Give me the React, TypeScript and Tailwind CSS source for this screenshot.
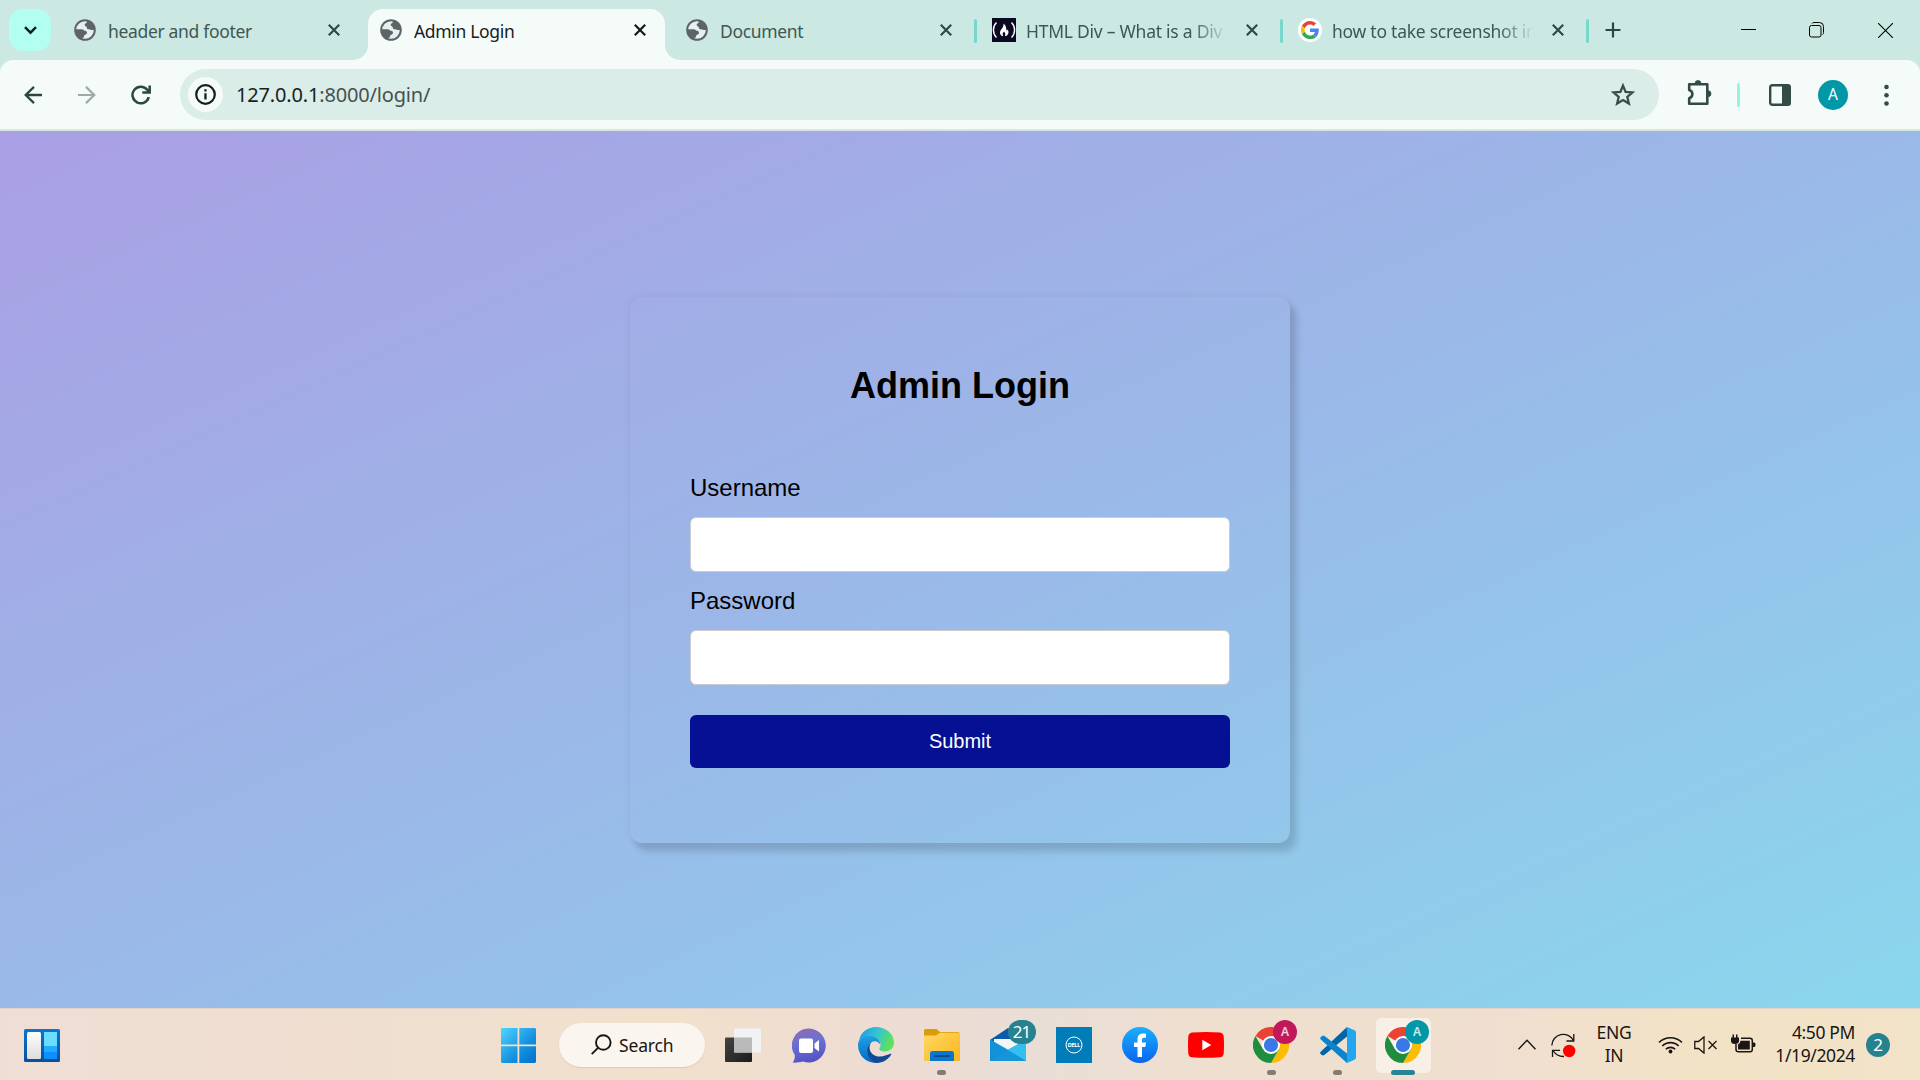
import React from "react";

const UI = "font-['Noto_Sans','Open_Sans',sans-serif]";

function Globe() {
  return (
    <svg width="22" height="22" viewBox="0 0 22 22">
      <circle cx="11" cy="11" r="9.800" fill="#e4f1ee" stroke="#5f6368" strokeWidth="2" />
      <path d="M13 1.500C12.700 2.600 13.200 3.300 12.200 4c-1 .6-1.700 1-1.500 2.200.2 1 1.600.8 1.900 1.700.4 1.400.6 2.300 2.300 2.400 1.600.1 2.600.8 3.600.8h2.400C20.900 6.500 17.500 2.500 13 1.500z" fill="#5f6368" />
      <path d="M1.500 10.200H7.500c2 0 2.500 1.600 4.200 1.900 1.700.3 1.800 2.800.2 3.300-1.500.4-1.800.9-1.900 2.100-.1.900-.7 1.200-1.500 1.500L7.500 20.400C3.600 18.800 1.100 15 1.500 10.200z" fill="#5f6368" />
    </svg>
  );
}

function CloseX({ color }: { color: string }) {
  return (
    <svg width="12" height="12" viewBox="0 0 12 12">
      <path d="M0.800 0.800 11.200 11.200M11.200 0.800 0.800 11.200" stroke={color} strokeWidth="2.200" />
    </svg>
  );
}

function FccIcon() {
  return (
    <svg width="24" height="24" viewBox="0 0 24 24">
      <rect width="24" height="24" fill="#0a0a23" />
      <path d="M4.500 4.500C.4 8.500.4 15.500 4.500 19.500M19.500 4.500c4.100 4 4.100 11 0 15" fill="none" stroke="#fff" strokeWidth="1.400" />
      <path d="M11.500 5.500c.2 2.600-.8 4-2.100 5.800-1.600 2-2.200 4.500.4 6.700h1.400c-1.200-2-.2-3.400 1-4.400 .3 1.300 1.900 2.100 .8 4.400h1.300c2.600-1.800 2.700-4.300 1.400-6.500-.3.700-.6 1-1.200 1C14.300 10 14 7.500 11.500 5.500z" fill="#fff" />
    </svg>
  );
}

function GoogleIcon() {
  return (
    <svg width="24" height="24" viewBox="0 0 24 24">
      <circle cx="12" cy="12" r="12" fill="#fff" />
      <g transform="translate(2.900 2.900) scale(0.380)">
        <path fill="#EA4335" d="M24 9.500c3.540 0 6.710 1.220 9.210 3.600l6.850-6.850C35.900 2.380 30.470 0 24 0 14.620 0 6.510 5.380 2.560 13.220l7.980 6.190C12.430 13.720 17.740 9.500 24 9.500z" />
        <path fill="#4285F4" d="M46.980 24.550c0-1.570-.15-3.090-.38-4.550H24v9.020h12.940c-.58 2.960-2.260 5.480-4.780 7.180l7.730 6c4.510-4.180 7.090-10.360 7.090-17.650z" />
        <path fill="#FBBC05" d="M10.530 28.590c-.48-1.450-.76-2.990-.76-4.590s.27-3.140.76-4.590l-7.980-6.190C.92 16.460 0 20.120 0 24c0 3.880.92 7.540 2.560 10.780l7.970-6.190z" />
        <path fill="#34A853" d="M24 48c6.480 0 11.930-2.130 15.890-5.810l-7.730-6c-2.150 1.450-4.920 2.300-8.160 2.300-6.260 0-11.570-4.220-13.470-9.910l-7.980 6.190C6.510 42.620 14.620 48 24 48z" />
      </g>
    </svg>
  );
}

type TabProps = { icon: React.ReactNode; title: string; active?: boolean; fade?: boolean; sep?: boolean };

function Tab({ icon, title, active, fade, sep }: TabProps) {
  return (
    <div className="relative flex h-[60px] w-[306px] shrink-0 items-center">
      {active && (
        <>
          <div className="absolute left-0 top-[9px] h-[51px] w-[297px] rounded-t-[15px] bg-[#f5fbf9]" />
          <svg className="absolute -left-[15px] top-[45px]" width="15" height="15"><path d="M15 0V15H0A15 15 0 0 0 15 0" fill="#f5fbf9" /></svg>
          <svg className="absolute left-[297px] top-[45px]" width="15" height="15"><path d="M0 0V15H15A15 15 0 0 1 0 0" fill="#f5fbf9" /></svg>
        </>
      )}
      <div className={`relative flex w-6 justify-center ${fade ? "ml-3" : "ml-[11px] mr-px"}`}>{icon}</div>
      <div
        className={`relative ml-[10px] mt-px w-[202px] overflow-hidden whitespace-nowrap text-[17.500px] leading-[26px] ${UI} font-normal ${fade ? "tracking-[-0.250px]" : "tracking-[-0.330px]"} ${active ? "text-[#18201f]" : "text-[#3f5753]"} ${fade ? "[mask-image:linear-gradient(to_right,#000_82%,transparent_100%)]" : ""}`}
      >
        {title}
      </div>
      <div className="relative ml-[18px]"><CloseX color={active ? "#101a18" : "#2f4a46"} /></div>
      {sep && <div className="absolute right-[3px] top-[19px] h-6 w-[3px] rounded-sm bg-[#74d9cb]" />}
    </div>
  );
}

function Puzzle() {
  return (
    <svg width="26" height="26" viewBox="0 0 26 26" fill="none" stroke="#334b47" strokeWidth="2.600" strokeLinejoin="round">
      <path d="M3.200 4.300H21.300V23.700H3.200V18.200a4.300 4.300 0 0 0 0-8.300z" />
      <path d="M9 3.500a3 3 0 0 1 6 0zM22 10.700a3 3 0 0 1 0 6z" fill="#334b47" stroke="#334b47" strokeWidth=".8" />
    </svg>
  );
}

function Toolbar() {
  return (
    <div className="bg-[#cce8e2]">
      <div className="flex h-[71px] items-center rounded-t-[13px] border-b-2 border-[#d8e6e0] bg-[#f5fbf9]">
        <svg className="ml-6" width="18" height="18" viewBox="0 0 18 18" fill="none" stroke="#2c4743" strokeWidth="2.300"><path d="M18 9H2M10 .9 1.700 9 10 17.100" /></svg>
        <svg className="ml-9" width="18" height="18" viewBox="0 0 18 18" fill="none" stroke="#9fa9a6" strokeWidth="2.200"><path d="M0 9H16M8 .9 16.300 9 8 17.100" /></svg>
        <svg className="ml-[35px]" width="20" height="20" viewBox="0 0 20 20" fill="none" stroke="#2c4743" strokeWidth="2.500"><path d="M17.800 12.200A8.300 8.300 0 1 1 16.300 4.800L18 7M18.700 .5V7.500H11.300" /></svg>
        <div className="ml-[29px] flex h-[51px] w-[1479px] shrink-0 items-center rounded-full bg-[#daede8]">
          <div className="ml-2 flex size-[35px] items-center justify-center rounded-full bg-[#f5fbf9]">
            <svg width="21" height="21" viewBox="0 0 21 21"><circle cx="10.500" cy="10.500" r="9.300" fill="none" stroke="#151d1b" strokeWidth="2.200" /><path d="M9.300 9.300h2.300v6.200H9.300zM9.300 5.300h2.300v2.300H9.300z" fill="#151d1b" /></svg>
          </div>
          <div className={`ml-[13px] w-[1375px] whitespace-nowrap text-[20px] leading-[28px] tracking-[-0.170px] text-[#47514f] ${UI} font-normal`}>
            <span className="text-[#1a2120]">127.0.0.1</span>:8000/login/
          </div>
          <svg width="24" height="24" viewBox="0 0 24 24" fill="none" stroke="#3f4b49" strokeWidth="2.300"><path d="M12 2.600l2.600 6.300 7 .5-5.300 4.500 1.600 6.700L12 17.100l-5.900 3.500 1.600-6.700-5.300-4.500 7-.5z" /></svg>
        </div>
        <div className="ml-[27px] -mt-1"><Puzzle /></div>
        <div className="ml-[25px] h-6 w-[3px] rounded-sm bg-[#96f3e5]" />
        <svg className="ml-[29px]" width="22" height="22" viewBox="0 0 22 22"><rect x="1.200" y="1.200" width="19.600" height="19.600" rx="2" fill="none" stroke="#334b47" strokeWidth="2.400" /><path d="M13 1h7v20h-7z" fill="#334b47" /></svg>
        <div className={`ml-[27px] flex size-[30px] items-center justify-center rounded-full bg-[#0097a7] text-[15.500px] text-white ${UI}`}>A</div>
        <svg className="ml-[36px]" width="5" height="22" viewBox="0 0 5 22" fill="#334b47"><circle cx="2.500" cy="3" r="2.300" /><circle cx="2.500" cy="11.200" r="2.300" /><circle cx="2.500" cy="19.500" r="2.300" /></svg>
      </div>
    </div>
  );
}

function TabStrip() {
  return (
    <div className="flex h-[60px] bg-[#cce8e2]">
      <div className="ml-[9px] mr-[11px] mt-[9px] flex size-[42px] shrink-0 items-center justify-center rounded-[14px] bg-[#b2fff2]">
        <svg width="13" height="9" viewBox="0 0 13 9"><path d="M1 1.200l5.500 5.500L12 1.200" fill="none" stroke="#0d1f1c" strokeWidth="2.400" /></svg>
      </div>
      <Tab icon={<Globe />} title="header and footer" />
      <Tab icon={<Globe />} title="Admin Login" active />
      <Tab icon={<Globe />} title="Document" sep />
      <Tab icon={<FccIcon />} title="HTML Div – What is a Div" fade sep />
      <Tab icon={<GoogleIcon />} title="how to take screenshot in" fade sep />
      <div className="flex h-[60px] items-center">
        <svg className="ml-[13px] shrink-0" width="16" height="16" viewBox="0 0 16 16"><path d="M8 .5v15M.5 8h15" stroke="#2c4743" strokeWidth="2.200" /></svg>
        <svg className="ml-[120px]" width="15" height="15"><path d="M0 6.500h15" stroke="#000" /></svg>
        <svg className="ml-[53px]" width="15" height="16" viewBox="0 0 15 16" fill="none" stroke="#000"><rect x=".5" y="3.500" width="11.500" height="11.500" rx="2" /><path d="M3 1.500Q3.500.5 5 .5h5.500a4 4 0 0 1 4 4v6q0 1.500-1 2" /></svg>
        <svg className="ml-[54px]" width="15" height="15"><path d="M0 0l15 15M15 0L0 15" stroke="#000" strokeWidth="1.100" /></svg>
      </div>
    </div>
  );
}

function LoginPage() {
  return (
    <div className="flex h-[877px] items-start justify-center bg-[linear-gradient(to_bottom_right,#aa9fe4,#9ab9e8_50%,#8ad7ed)] font-['Liberation_Sans',Arial,sans-serif] text-black">
      <div className="mt-[166px] h-[546px] w-[660px] rounded-[12px] px-[60px] shadow-[6px_8px_6px_1px_rgba(0,0,0,0.130),0_0_8px_rgba(0,0,0,0.060)]">
        <h1 className="mt-[68px] text-center text-[36px] font-bold leading-[42px]">Admin Login</h1>
        <label className="mt-[67px] block text-[24px] leading-[28px]">Username</label>
        <input className="mt-[15px] block h-[55px] w-full rounded-[6px] border border-[#ccc] bg-white" />
        <label className="mt-[15px] block text-[24px] leading-[28px]">Password</label>
        <input type="password" className="mt-[15px] block h-[55px] w-full rounded-[6px] border border-[#ccc] bg-white" />
        <button className="mt-[30px] block h-[53px] w-full rounded-[6px] bg-[#051192] text-[20px] leading-[53px] text-white">Submit</button>
      </div>
    </div>
  );
}

function Chrome({ color, letter }: { color: string; letter: string }) {
  return (
    <div className="relative size-9">
      <svg width="36" height="36" viewBox="0 0 36 36">
        <path d="M18 18L2.400 9A18 18 0 0 1 33.600 9z" fill="#ea4335" />
        <path d="M18 9H33.600A18 18 0 0 1 18 36L25.800 22.500z" fill="#fbbc04" />
        <path d="M2.400 9A18 18 0 0 0 18 36L25.800 22.500 18 18 10.200 22.500z" fill="#1e8e3e" />
        <circle cx="18" cy="18" r="9" fill="#fff" />
        <circle cx="18" cy="18" r="7.100" fill="#3b78e7" />
      </svg>
      <div className={`absolute -top-[7px] left-5 flex size-6 items-center justify-center rounded-full text-[12px] font-semibold text-white/80 ${color} ${UI}`}>{letter}</div>
    </div>
  );
}

function TaskItem({ children, running }: { children: React.ReactNode; running?: boolean }) {
  return (
    <div className="relative flex h-[72px] w-[66px] shrink-0 items-center justify-center pt-px">
      {children}
      {running && <div className="absolute bottom-[6px] left-[29px] h-[5px] w-[9px] rounded-full bg-[#857b75]" />}
    </div>
  );
}

function Taskbar() {
  return (
    <div className={`relative flex h-[72px] items-center border-t border-[#e0d4ca] bg-[linear-gradient(to_right,#efded4_0%,#efdfd0_20%,#f1e0cb_35%,#eedcd3_46%,#e9ded6_54%,#efdfcf_63%,#f0dfd0_78%,#f2e2c6_88%,#f2e4c9_100%)] ${UI} text-[#191613]`}>
      <svg className="ml-6 mt-px shrink-0" width="36" height="33" viewBox="0 0 36 33">
        <defs>
          <linearGradient id="wg" x1="0" y1="0" x2="0" y2="1"><stop offset="0" stopColor="#0e75cf" /><stop offset="1" stopColor="#084f9c" /></linearGradient>
          <linearGradient id="ww" x1="0" y1="0" x2="0" y2="1"><stop offset="0" stopColor="#fff" /><stop offset="1" stopColor="#dcdcdc" /></linearGradient>
        </defs>
        <rect width="36" height="33" rx="1.500" fill="url(#wg)" />
        <rect x="3" y="3" width="14" height="27" rx="1.500" fill="url(#ww)" />
        <path d="M20 3h13v14H20z" fill="#69dcff" /><path d="M20 17h13v6H20z" fill="#22acff" /><path d="M20 23h13v7H20z" fill="#0f8ffb" />
      </svg>
      <svg className="ml-[441px] mt-[2px] shrink-0" width="35" height="35" viewBox="0 0 35 35">
        <defs><linearGradient id="win" x1="0" y1="0" x2="1" y2="1"><stop offset="0" stopColor="#4fd4ff" /><stop offset=".6" stopColor="#1590e0" /><stop offset="1" stopColor="#0070cc" /></linearGradient></defs>
        <path d="M1 0H16.500V16.500H0V1zM18.300 0H34l1 1V16.500H18.300zM0 18.300H16.500V35H1L0 34zM18.300 18.300H35V34l-1 1H18.300z" fill="url(#win)" />
      </svg>
      <div className="ml-[23px] flex h-[44px] w-[146px] shrink-0 items-center rounded-full bg-[#faf5ef] shadow-[0_1px_1px_#dccbb9]">
        <svg className="ml-8" width="21" height="21" viewBox="0 0 21 21" fill="none" stroke="#191613" strokeWidth="1.900"><circle cx="12.300" cy="8.500" r="7.300" /><path d="M7 13.800L.7 20.200" /></svg>
        <div className="ml-[7px] mt-px text-[17.500px] leading-6 tracking-[-0.150px]">Search</div>
      </div>
      <div className="ml-[5px] flex">
        <TaskItem>
          <svg width="36" height="35" viewBox="0 0 36 35">
            <defs><linearGradient id="tv" x1="0" y1="0" x2="1" y2="1"><stop offset="0" stopColor="#444" /><stop offset="1" stopColor="#1c1c1c" /></linearGradient></defs>
            <rect y="9.500" width="27" height="24.500" rx="1" fill="url(#tv)" />
            <rect x="9" y=".5" width="27" height="24" rx="1" fill="#f1f2f3" /><path d="M9 9.500H27V24.500H9z" fill="#b9b9b9" />
          </svg>
        </TaskItem>
        <TaskItem>
          <svg width="34" height="35" viewBox="0 0 34 35">
            <defs><linearGradient id="tm" x1=".3" y1="0" x2=".5" y2="1"><stop offset="0" stopColor="#8d6ab4" /><stop offset=".4" stopColor="#6b72d0" /><stop offset="1" stopColor="#5550c6" /></linearGradient></defs>
            <path d="M17 .5a17 17 0 1 1-6 33c-3 .8-6.500 1.300-10.300 1.100C2.500 32 3 29.500 2.800 27A17 17 0 0 1 17 .5z" fill="url(#tm)" />
            <rect x="7" y="10.500" width="14" height="14.500" rx="2" fill="#fff" /><path d="M22.500 15.500L27 12V23.500l-4.500-3.500z" fill="#fff" />
          </svg>
        </TaskItem>
        <TaskItem>
          <svg className="ml-px" width="36" height="36" viewBox="0 0 36 36">
            <defs>
              <linearGradient id="e1" x1="0" y1=".2" x2="1" y2=".5"><stop offset="0" stopColor="#1b9de2" /><stop offset=".5" stopColor="#34c6d0" /><stop offset="1" stopColor="#62e255" /></linearGradient>
              <linearGradient id="e2" x1=".3" y1="0" x2=".4" y2="1"><stop offset="0" stopColor="#1fa0e4" /><stop offset="1" stopColor="#0068c6" /></linearGradient>
            </defs>
            <path d="M1 13C3 5 10 0 18 0c10 0 18 7 18 15.500C36 21 32 24.500 27 24.500c-4 0-6.500-1.500-5.500-3.500 3-4 .5-8-5-9.500C10 9 4 10 1 13z" fill="url(#e1)" />
            <path d="M0 18C0 12 5 9 10.500 9c7 0 12 4 12 9-2-4-7-5.500-10.500-1.500C7 23 12 33 20 35.900 9 37 0 29 0 18z" fill="url(#e2)" />
            <path d="M14 14.500c-5 5-2 15 7.500 15 5 0 8.500-2 11-2.700.8-.2 1 .3.700.8C30 33 24.500 36 19 36 9 34.500 6 20 14 14.500z" fill="#114a94" />
          </svg>
        </TaskItem>
        <TaskItem running>
          <svg className="ml-px" width="36" height="36" viewBox="0 0 36 36">
            <defs><linearGradient id="fo" x1="0" y1="0" x2="1" y2="1"><stop offset="0" stopColor="#ffd866" /><stop offset="1" stopColor="#fbb61a" /></linearGradient></defs>
            <path d="M0 3.500Q0 2 1.500 2H12.500L16 5H34.500L36 6.500V14H0z" fill="#dc9c07" />
            <path d="M0 8.500H12L16 5.700H36V34H0z" fill="url(#fo)" />
            <path d="M6 34V26.500Q6 24 8.500 24h19Q30 24 30 26.500V34z" fill="#0b76cd" /><path d="M11 29.200H25" stroke="#0a4a84" strokeWidth="1.800" strokeLinecap="round" />
          </svg>
        </TaskItem>
        <TaskItem>
          <div className="relative ml-px size-9">
            <svg width="36" height="36" viewBox="0 0 36 36">
              <path d="M0 13L18 1 36 13 18 24z" fill="#0a5cab" /><path d="M4 12H32V22L18 28 4 16z" fill="#f5f5f7" />
              <path d="M0 12.500L18 22.500 36 12.500V34H0z" fill="#35bfee" /><path d="M0 12.500L36 34H0z" fill="#1391d8" /><path d="M36 34L18 23 0 34z" fill="#1797dc" opacity=".6" />
            </svg>
            <div className="absolute -top-[7px] left-[18px] flex h-6 w-7 items-center justify-center rounded-full bg-[#278290] text-[17px] tracking-[-1px] text-white">21</div>
          </div>
        </TaskItem>
        <TaskItem>
          <svg className="ml-px" width="36" height="36" viewBox="0 0 36 36">
            <rect width="36" height="36" fill="#007db8" /><circle cx="18" cy="18" r="8" fill="none" stroke="#fff" strokeWidth="1" />
            <text x="18" y="20" textAnchor="middle" fontSize="5.400" fontWeight="700" fill="#fff" fontFamily="Inter, sans-serif" textLength="12.500">DELL</text>
          </svg>
        </TaskItem>
        <TaskItem>
          <svg className="ml-px" width="36" height="36" viewBox="0 0 36 36">
            <defs><linearGradient id="fb" x1="0" y1="0" x2="0" y2="1"><stop offset="0" stopColor="#19afff" /><stop offset="1" stopColor="#0865ee" /></linearGradient></defs>
            <circle cx="18" cy="18" r="18" fill="url(#fb)" />
            <path d="M15.500 30V20H12V15.500h3.500v-3c0-4 2-6 5.500-6 1.200 0 2.200.1 3 .3v4h-2c-1.500 0-2 .8-2 2.200v2.500h4l-.7 4.500H20V30z" fill="#fff" />
          </svg>
        </TaskItem>
        <TaskItem>
          <svg className="ml-px" width="36" height="36" viewBox="0 0 36 36"><path d="M4 5.500Q18 4.500 32 5.500 35.300 6 35.700 9.500 36.300 18 35.700 26.500 35.300 30 32 30.300 18 31.300 4 30.300.7 30 .3 26.500-.3 18 .3 9.500.7 6 4 5.500z" fill="#f00" /><path d="M14.300 12.800V23.200L23.300 18z" fill="#fff" /></svg>
        </TaskItem>
        <TaskItem running><Chrome color="bg-[#c2185b]" letter="A" /></TaskItem>
        <TaskItem running>
          <svg className="ml-px" width="36" height="36" viewBox="0 0 36 36">
            <path d="M27 0L3 22.500.5 25q-1 1.200.3 2.200l1.500 1q1 .5 2-.2L27 9.500z" fill="#0065a9" />
            <path d="M27 36L.8 12.500Q-.5 11.300.8 10L2.600 8.800q1-.5 2 .2L27 26.500z" fill="#0a84cc" />
            <path d="M27 0L34.500 3.200Q36 4 36 5.500V30.500Q36 32 34.500 32.800L27 36Q25.500 35.500 27 33.500V2.500Q25.500 .5 27 0z" fill="#24a5f0" />
          </svg>
        </TaskItem>
        <div className="relative flex h-[72px] w-[66px] items-center justify-center pt-px">
          <div className="absolute left-[5px] top-[8px] h-[57px] w-[57px] rounded-[6px] border border-[#ebdfd3] bg-[#f8efe7]" />
          <Chrome color="bg-[#0097a7]" letter="A" />
          <div className="absolute bottom-[6px] left-[21px] h-[5px] w-6 rounded-full bg-[#278494]" />
        </div>
      </div>
      <svg className="ml-[82px] shrink-0" width="18" height="11" viewBox="0 0 18 11"><path d="M.5 10.200L9 1.300l8.500 8.900" fill="none" stroke="#191613" strokeWidth="1.400" /></svg>
      <svg className="ml-[15px] shrink-0" width="25" height="26" viewBox="0 0 25 26" fill="none" stroke="#191613" strokeWidth="1.300">
        <path d="M.8 13.500A11.500 11.500 0 0 1 22.500 8.500M22.800 2V9H15.500M1.500 25V18.300H9M2 18.500Q6 24.800 13 24.500" /><circle cx="18.200" cy="19" r="6.200" fill="#f00" stroke="none" />
      </svg>
      <div className="-mt-px ml-[20px] w-[36px] shrink-0 text-center text-[17.500px] leading-[23px] tracking-[-0.300px]">ENG<br />IN</div>
      <svg className="ml-[26px] shrink-0" width="25" height="19" viewBox="0 0 25 19" fill="none" stroke="#191613" strokeWidth="1.600">
        <path d="M1 7.500a16.300 16.300 0 0 1 23 0M4.300 11a11.600 11.600 0 0 1 16.400 0M7.800 14.300a6.700 6.700 0 0 1 9.400 0" /><circle cx="12.500" cy="16.500" r="1.900" fill="#191613" stroke="none" />
      </svg>
      <svg className="ml-[11px] shrink-0" width="24" height="18" viewBox="0 0 24 18" fill="none" stroke="#191613" strokeWidth="1.300"><path d="M.8 5.500H4.500L10 .9V17.100L4.500 12.500H.8zM14.500 5l8 8M22.500 5l-8 8" /></svg>
      <svg className="-mt-[2px] ml-[13px] shrink-0" width="25" height="20" viewBox="0 0 25 20">
        <path d="M10 4.300H19q2.300 0 2.300 2.300V15.500q0 2.300-2.300 2.300H7.500Q5 17.800 5 15.500V10" fill="none" stroke="#191613" strokeWidth="1.500" />
        <path d="M9.500 6.800H18.800V15.500H7V10.500Q9.500 9.500 9.500 6.800zM22 8.500h1.500q1 .5 1 2.200t-1 2.300H22zM0 3.500H8V7Q8 10 4 10T0 7zM1.500 .5H3V4H1.500zM5 .5H6.500V4H5z" fill="#191613" />
      </svg>
      <div className="-mt-px ml-[15px] w-[84px] shrink-0 whitespace-nowrap text-right text-[17.500px] leading-[23px] tracking-[-0.380px]">4:50 PM<br />1/19/2024</div>
      <div className="ml-[11px] flex size-6 shrink-0 items-center justify-center rounded-full bg-[#278290] text-[17px] text-white">2</div>
    </div>
  );
}

export default function App() {
  return (
    <div className="h-[1080px] w-[1920px] overflow-hidden">
      <TabStrip />
      <Toolbar />
      <LoginPage />
      <Taskbar />
    </div>
  );
}
